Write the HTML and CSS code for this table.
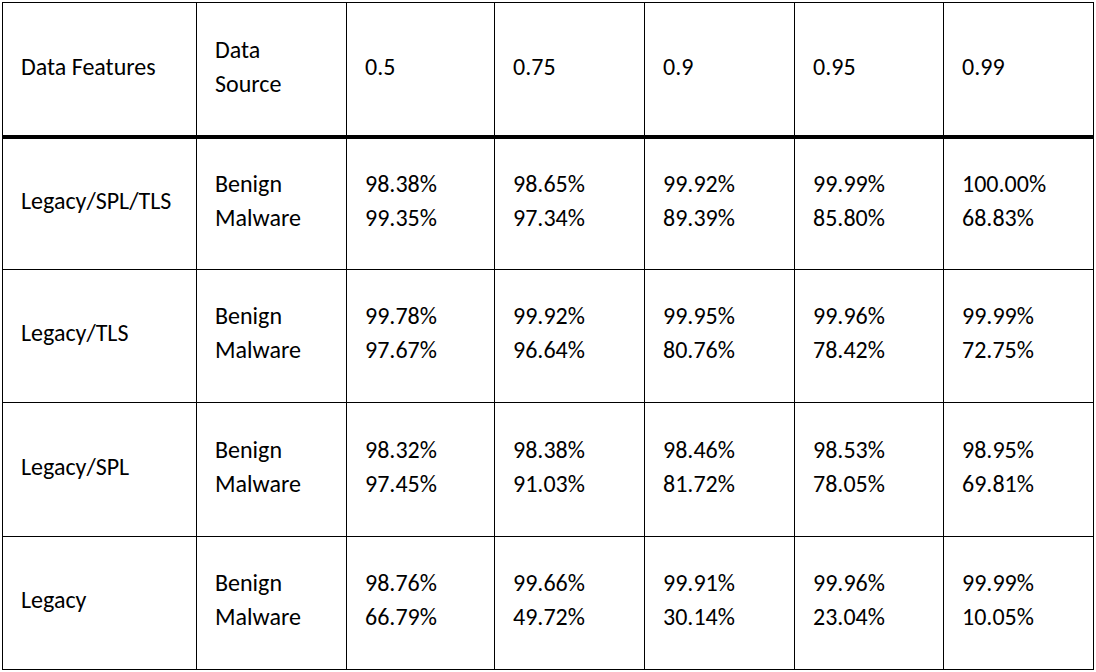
FILE: index.html
```html
<!DOCTYPE html>
<html>
<head>
<meta charset="utf-8">
<link rel="stylesheet" href="styles.css">
</head>
<body>
<div class="table">
  <div class="cell head">Data Features</div>
  <div class="cell head">Data<br>Source</div>
  <div class="cell head">0.5</div>
  <div class="cell head">0.75</div>
  <div class="cell head">0.9</div>
  <div class="cell head">0.95</div>
  <div class="cell head">0.99</div>

  <div class="cell">Legacy/SPL/TLS</div>
  <div class="cell"><div>Benign<br>Malware</div></div>
  <div class="cell"><div>98.38%<br>99.35%</div></div>
  <div class="cell"><div>98.65%<br>97.34%</div></div>
  <div class="cell"><div>99.92%<br>89.39%</div></div>
  <div class="cell"><div>99.99%<br>85.80%</div></div>
  <div class="cell"><div>100.00%<br>68.83%</div></div>

  <div class="cell">Legacy/TLS</div>
  <div class="cell"><div>Benign<br>Malware</div></div>
  <div class="cell"><div>99.78%<br>97.67%</div></div>
  <div class="cell"><div>99.92%<br>96.64%</div></div>
  <div class="cell"><div>99.95%<br>80.76%</div></div>
  <div class="cell"><div>99.96%<br>78.42%</div></div>
  <div class="cell"><div>99.99%<br>72.75%</div></div>

  <div class="cell">Legacy/SPL</div>
  <div class="cell"><div>Benign<br>Malware</div></div>
  <div class="cell"><div>98.32%<br>97.45%</div></div>
  <div class="cell"><div>98.38%<br>91.03%</div></div>
  <div class="cell"><div>98.46%<br>81.72%</div></div>
  <div class="cell"><div>98.53%<br>78.05%</div></div>
  <div class="cell"><div>98.95%<br>69.81%</div></div>

  <div class="cell">Legacy</div>
  <div class="cell"><div>Benign<br>Malware</div></div>
  <div class="cell"><div>98.76%<br>66.79%</div></div>
  <div class="cell"><div>99.66%<br>49.72%</div></div>
  <div class="cell"><div>99.91%<br>30.14%</div></div>
  <div class="cell"><div>99.96%<br>23.04%</div></div>
  <div class="cell"><div>99.99%<br>10.05%</div></div>
</div>
</body>
</html>
```
FILE: styles.css
```css
html, body {
  margin: 0;
  padding: 0;
  background: #fff;
}
body {
  padding: 2px;
  font-family: Carlito, Calibri, "Open Sans", "Liberation Sans", sans-serif;
  font-size: 24px;
  color: #000;
}
.table {
  display: grid;
  width: 1092px;
  box-sizing: border-box;
  grid-template-columns: 194px 150px 148px 150px 150px 149px 150px;
  grid-template-rows: 136px 131px 133px 134px 133px;
  border-left: 1px solid #000;
  border-top: 1px solid #000;
}
.cell {
  box-sizing: border-box;
  display: flex;
  align-items: center;
  padding-left: 18px;
  padding-bottom: 6px;
  line-height: 34px;
  border-right: 1px solid #000;
  border-bottom: 1px solid #000;
}
.cell.head {
  border-bottom: 4px solid #000;
  padding-bottom: 4px;
}
```
